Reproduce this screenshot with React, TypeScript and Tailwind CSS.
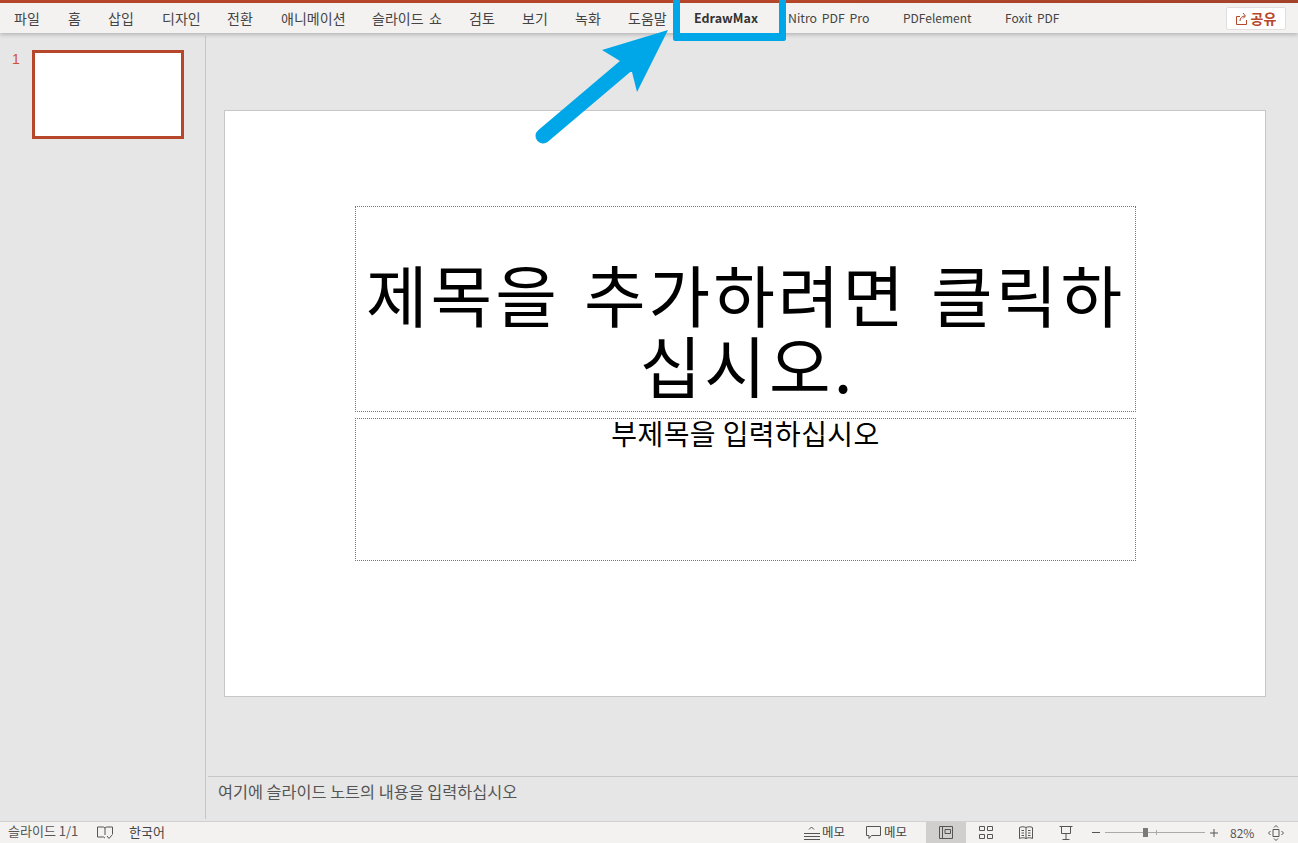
const font = "font-['Noto_Sans_CJK_KR','Noto_Sans',sans-serif]";

const tabs: { t: string; w: number }[] = [
  { t: "파일", w: 54 },
  { t: "홈", w: 40 },
  { t: "삽입", w: 54 },
  { t: "디자인", w: 65 },
  { t: "전환", w: 54 },
  { t: "애니메이션", w: 91 },
  { t: "슬라이드 쇼", w: 97 },
  { t: "검토", w: 53 },
  { t: "보기", w: 53 },
  { t: "녹화", w: 53 },
  { t: "도움말", w: 66 },
];

function Tab({ t, w }: { t: string; w: number }) {
  return (
    <div style={{ width: w }} className="shrink-0 text-[14px] tracking-[0.05px] [word-spacing:2px] leading-[30px] text-[#444] whitespace-nowrap">
      {t}
    </div>
  );
}

function StatusIcons() {
  return (
    <div className="flex items-center h-full text-[#444]">
      <svg width="17" height="17" viewBox="0 0 17 17" fill="none" stroke="#555" strokeWidth="1" className="mr-[2px]">
        <path d="M1 9.500h16M1 12.500h16M1 15.500h16M6 5.500l2.500-2.500 2.500 2.500" />
      </svg>
      <span className="text-[12.5px] w-[24px] whitespace-nowrap">메모</span>
      <svg width="15" height="15" viewBox="0 0 15 15" fill="none" stroke="#555" strokeWidth="1" className="ml-[20px] mr-[3px]">
        <path d="M.5 1.500h14v9H5.500l-2.500 3v-3H.5z" />
      </svg>
      <span className="text-[12.5px] w-[22px] whitespace-nowrap">메모</span>
      <div className="ml-[20px] w-[40px] h-full bg-[#d0cfcd] flex items-center justify-center">
        <svg width="14" height="13" viewBox="0 0 14 13" fill="none" stroke="#555" strokeWidth="1">
          <path d="M.5.500h13v12H.5zM3.500.500v12M6 3.500h5.500v4H6z" />
        </svg>
      </div>
      <svg width="14" height="13" viewBox="0 0 14 13" fill="none" stroke="#555" strokeWidth="1" className="ml-[13px]">
        <path d="M.5.500h5v4h-5zM8.500.500h5v4h-5zM.5 8.500h5v4h-5zM8.500 8.500h5v4h-5z" />
      </svg>
      <svg width="14" height="13" viewBox="0 0 14 13" fill="none" stroke="#555" strokeWidth="1" className="ml-[26px]">
        <path d="M.5 1.500c2-1 4.500-1 6.500 0 2-1 4.500-1 6.500 0v11c-2-1-4.500-1-6.500 0-2-1-4.500-1-6.500 0zM7 1.500v11M2.500 4.500h2.500M2.500 7h2.500M2.500 9.500h2.500M9 4.500h2.500M9 7h2.500M9 9.500h2.500" />
      </svg>
      <svg width="14" height="14" viewBox="0 0 14 14" fill="none" stroke="#555" strokeWidth="1" className="ml-[26px]">
        <path d="M.5.500h13M2.500.500v7h9v-7M7 7.500v6M3.500 13.500h7" />
      </svg>
      <div className="ml-[19px] w-[8px] h-px bg-[#555]" />
      <div className="relative ml-[5px] w-[100px] h-px bg-[#aaa]">
        <div className="absolute left-[38px] top-[-4px] w-[5px] h-[9px] bg-[#7a7a7a]" />
        <div className="absolute left-[51px] top-[-2px] w-px h-[5px] bg-[#aaa]" />
      </div>
      <svg width="8" height="8" viewBox="0 0 8 8" stroke="#555" strokeWidth="1" className="ml-[5px]">
        <path d="M0 4h8M4 0v8" />
      </svg>
      <span className="ml-[12px] w-[24px] text-[12px] text-[#555] whitespace-nowrap">82%</span>
      <svg width="16" height="16" viewBox="0 0 16 16" fill="none" stroke="#555" strokeWidth="1" className="ml-[14px]">
        <path d="M5 4.500h6v7H5zM6 2.500l2-2 2 2M6 13.500l2 2 2-2M2.500 6l-2 2 2 2M13.500 6l2 2-2 2" />
      </svg>
    </div>
  );
}

export default function App() {
  return (
    <div className={`${font} relative w-full h-[843px] overflow-hidden flex flex-col bg-[#e6e6e6]`}>
      <div className="h-[3px] shrink-0 bg-linear-to-r from-[#b7472a] from-60% to-[#a5432a]" />
      <div className="relative z-10 h-[30px] shrink-0 flex items-center bg-[#f3f2f1] pl-[14px] pr-[12px] shadow-[0_2px_4px_rgba(0,0,0,0.2)]">
        {tabs.map((x) => (
          <Tab key={x.t} t={x.t} w={x.w} />
        ))}
        <div className="shrink-0 w-[94px] text-[12.5px] leading-[30px] font-bold text-[#333]">EdrawMax</div>
        <div className="shrink-0 w-[115px] text-[12.3px] leading-[30px] text-[#444] [word-spacing:2px]">Nitro PDF Pro</div>
        <div className="shrink-0 w-[102px] text-[12px] leading-[30px] text-[#444]">PDFelement</div>
        <div className="shrink-0 text-[12px] leading-[30px] text-[#444] [word-spacing:2px]">Foxit PDF</div>
        <div className="ml-auto w-[60px] h-[23px] flex items-center justify-center gap-[2px] bg-white border border-[#e1dfdd] rounded-[2px] text-[14px] font-bold text-[#b7472a]">
          <svg width="13" height="13" viewBox="0 0 13 13" fill="none" stroke="#b7472a" strokeWidth="1">
            <path d="M4 4.500H.5v8h10V8M4 9c0-3 2-5 5-5M7 1l2.500 3L7 6.500" />
          </svg>
          공유
        </div>
      </div>

      <div className="flex-1 flex min-h-0">
        <div className="w-[206px] shrink-0 relative flex pt-[14px] pl-[12px] border-r border-[#c6c6c6] mt-[3px] mb-[2px]">
          <span className="font-['Liberation_Sans',sans-serif] text-[14px] leading-[18px] text-[#d2502e] w-[20px]">1</span>
          <div className="w-[152px] h-[89px] bg-white border-[3px] border-[#b7472a]" />
        </div>
        <div className="flex-1 min-w-0 flex flex-col mb-[2px]">
          <div className="flex-1 pt-[77px] pl-[18px]">
            <div className="w-[1042px] h-[587px] bg-white border border-[#c6c6c6] pt-[95px] pl-[130px]">
              <div className="w-[781px] h-[206px] border border-dotted border-[#777] flex items-center justify-center pt-[38px]">
                <div className="text-center text-[67px] leading-[71px] tracking-[3px] [word-spacing:6px] text-black whitespace-nowrap">
                  제목을 추가하려면 클릭하
                  <br />
                  <span className="relative left-[2px]">십시오.</span>
                </div>
              </div>
              <div className="mt-[6px] w-[781px] h-[143px] border border-dotted border-[#777] text-center text-[28px] tracking-[0.4px] leading-[28px] text-black">
                부제목을 입력하십시오
              </div>
            </div>
          </div>
          <div className="ml-[2px] h-[43px] shrink-0 border-t border-[#c6c6c6] pl-[10px] pt-[3px] text-[16.3px] leading-[22px] text-[#555]">
            여기에 슬라이드 노트의 내용을 입력하십시오
          </div>
        </div>
      </div>

      <div className="h-[22px] shrink-0 flex items-center justify-between bg-[#f3f2f1] border-t border-[#d0d0d0] pl-[8px] pr-[14px]">
        <div className="flex items-center text-[13px] text-[#555]">
          <span className="w-[89px] pb-[3px] whitespace-nowrap">슬라이드 1/1</span>
          <svg width="16" height="14" viewBox="0 0 16 14" fill="none" stroke="#555" strokeWidth="1">
            <path d="M.5 1h6l1.500 1 1.500-1h6v7M.5 1v10h6l1.500 1M8 2v7M10 10l2 2.500 3.500-4" />
          </svg>
          <span className="ml-[16px] pb-[1px] text-[#444]">한국어</span>
        </div>
        <StatusIcons />
      </div>

      <div className="absolute z-20 left-[673px] top-0 w-[113px] h-[41px] border-x-[7px] border-b-[8px] border-[#00a7e8] rounded-b-[3px]" />
      <svg width="1298" height="843" className="absolute z-20 left-0 top-0 pointer-events-none">
        <path d="M543 136 L628 64" stroke="#00a7e8" strokeWidth="15" strokeLinecap="round" fill="none" />
        <path d="M668 30 L602 50 L620 61 L624 72 L632 72 L637 92 Z" fill="#00a7e8" />
      </svg>
    </div>
  );
}
